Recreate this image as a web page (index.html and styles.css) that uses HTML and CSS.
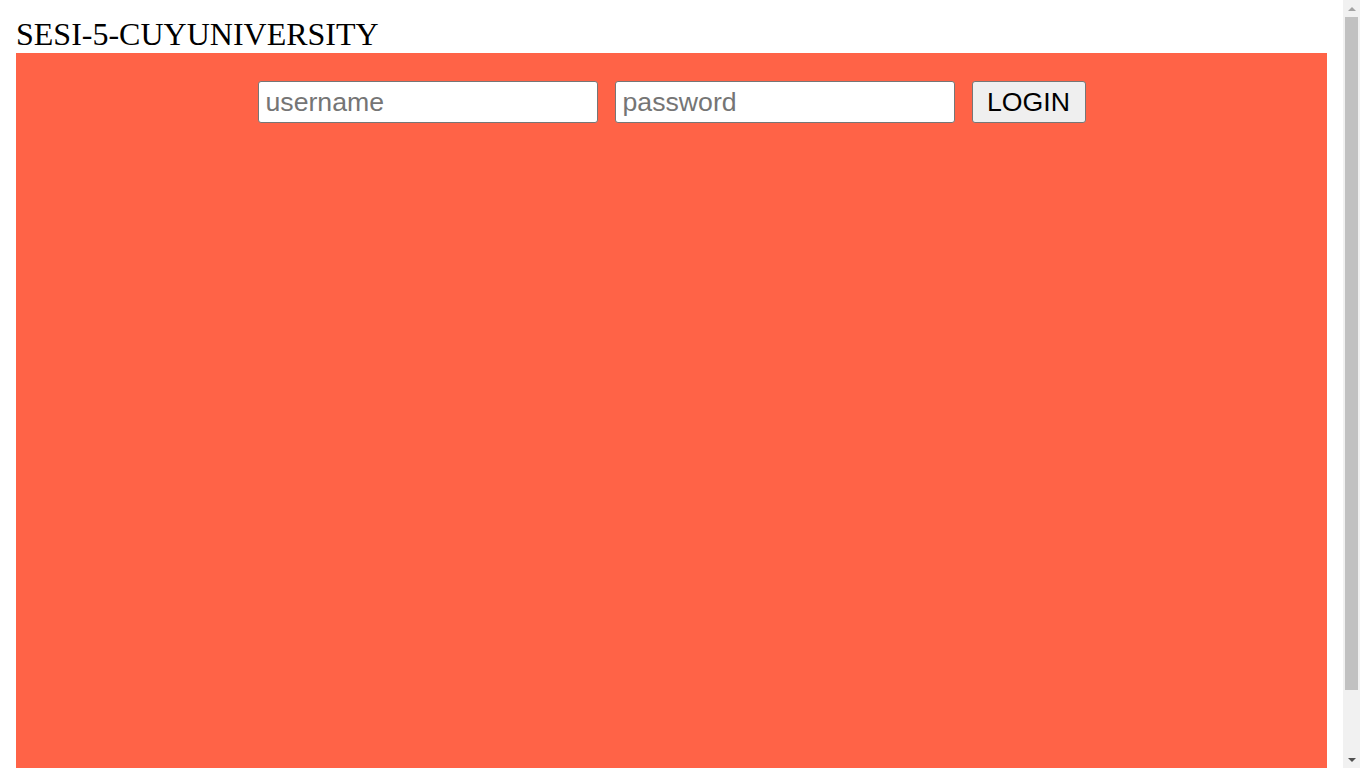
FILE: index.html
```html
<!DOCTYPE html>
<html>
<head>
<meta charset="utf-8">
<link rel="stylesheet" href="styles.css">
</head>
<body>
<div class="title">SESI-5-CUYUNIVERSITY</div>
<div class="panel">
  <form class="login">
    <input class="field" type="text" placeholder="username">
    <input class="field" type="password" placeholder="password">
    <button class="btn" type="button">LOGIN</button>
  </form>
</div>
<div class="scrollbar" aria-hidden="true">
  <div class="sb-btn sb-up"><span class="tri-up"></span></div>
  <div class="sb-track"><div class="sb-thumb"></div></div>
  <div class="sb-btn sb-down"><span class="tri-down"></span></div>
</div>
</body>
</html>
```
FILE: styles.css
```css
html {
  background: #ffffff;
}
body {
  margin: 16px 33px 16px 16px;
  font-family: "Liberation Serif", "Times New Roman", serif;
}
.title {
  font-size: 32px;
  line-height: 37px;
  color: #000;
}
.panel {
  background: #ff6347;
  height: 100vh;
  padding-top: 28px;
  box-sizing: border-box;
}
.login {
  display: flex;
  justify-content: center;
  align-items: flex-start;
  gap: 17px;
  margin: 0;
}
.field {
  box-sizing: border-box;
  width: 340px;
  height: 42px;
  padding: 0 7px;
  border: 1px solid #767676;
  border-radius: 3px;
  background: #fff;
  font-family: "Liberation Sans", Arial, sans-serif;
  font-size: 26.67px;
  color: #000;
  outline: none;
}
.field::placeholder {
  color: #757575;
}
.btn {
  box-sizing: border-box;
  width: 114px;
  height: 42px;
  padding: 0;
  border: 1px solid #767676;
  border-radius: 3px;
  background: #efefef;
  font-family: "Liberation Sans", Arial, sans-serif;
  font-size: 26.67px;
  color: #000;
}

/* imitation of the browser's vertical scrollbar */
.scrollbar {
  position: fixed;
  top: 0;
  right: 0;
  width: 17px;
  height: 100vh;
  background: #f1f1f1;
  display: flex;
  flex-direction: column;
}
.sb-btn {
  height: 17px;
  flex: none;
  display: flex;
  align-items: center;
  justify-content: center;
}
.sb-track {
  flex: 1;
  padding: 0 2px 61px 2px;
  display: flex;
  flex-direction: column;
}
.sb-thumb {
  flex: 1;
  background: #c1c1c1;
}
.tri-up {
  width: 0;
  height: 0;
  border-left: 4px solid transparent;
  border-right: 4px solid transparent;
  border-bottom: 4px solid #a3a3a3;
}
.tri-down {
  width: 0;
  height: 0;
  border-left: 4px solid transparent;
  border-right: 4px solid transparent;
  border-top: 4px solid #505050;
}
```
